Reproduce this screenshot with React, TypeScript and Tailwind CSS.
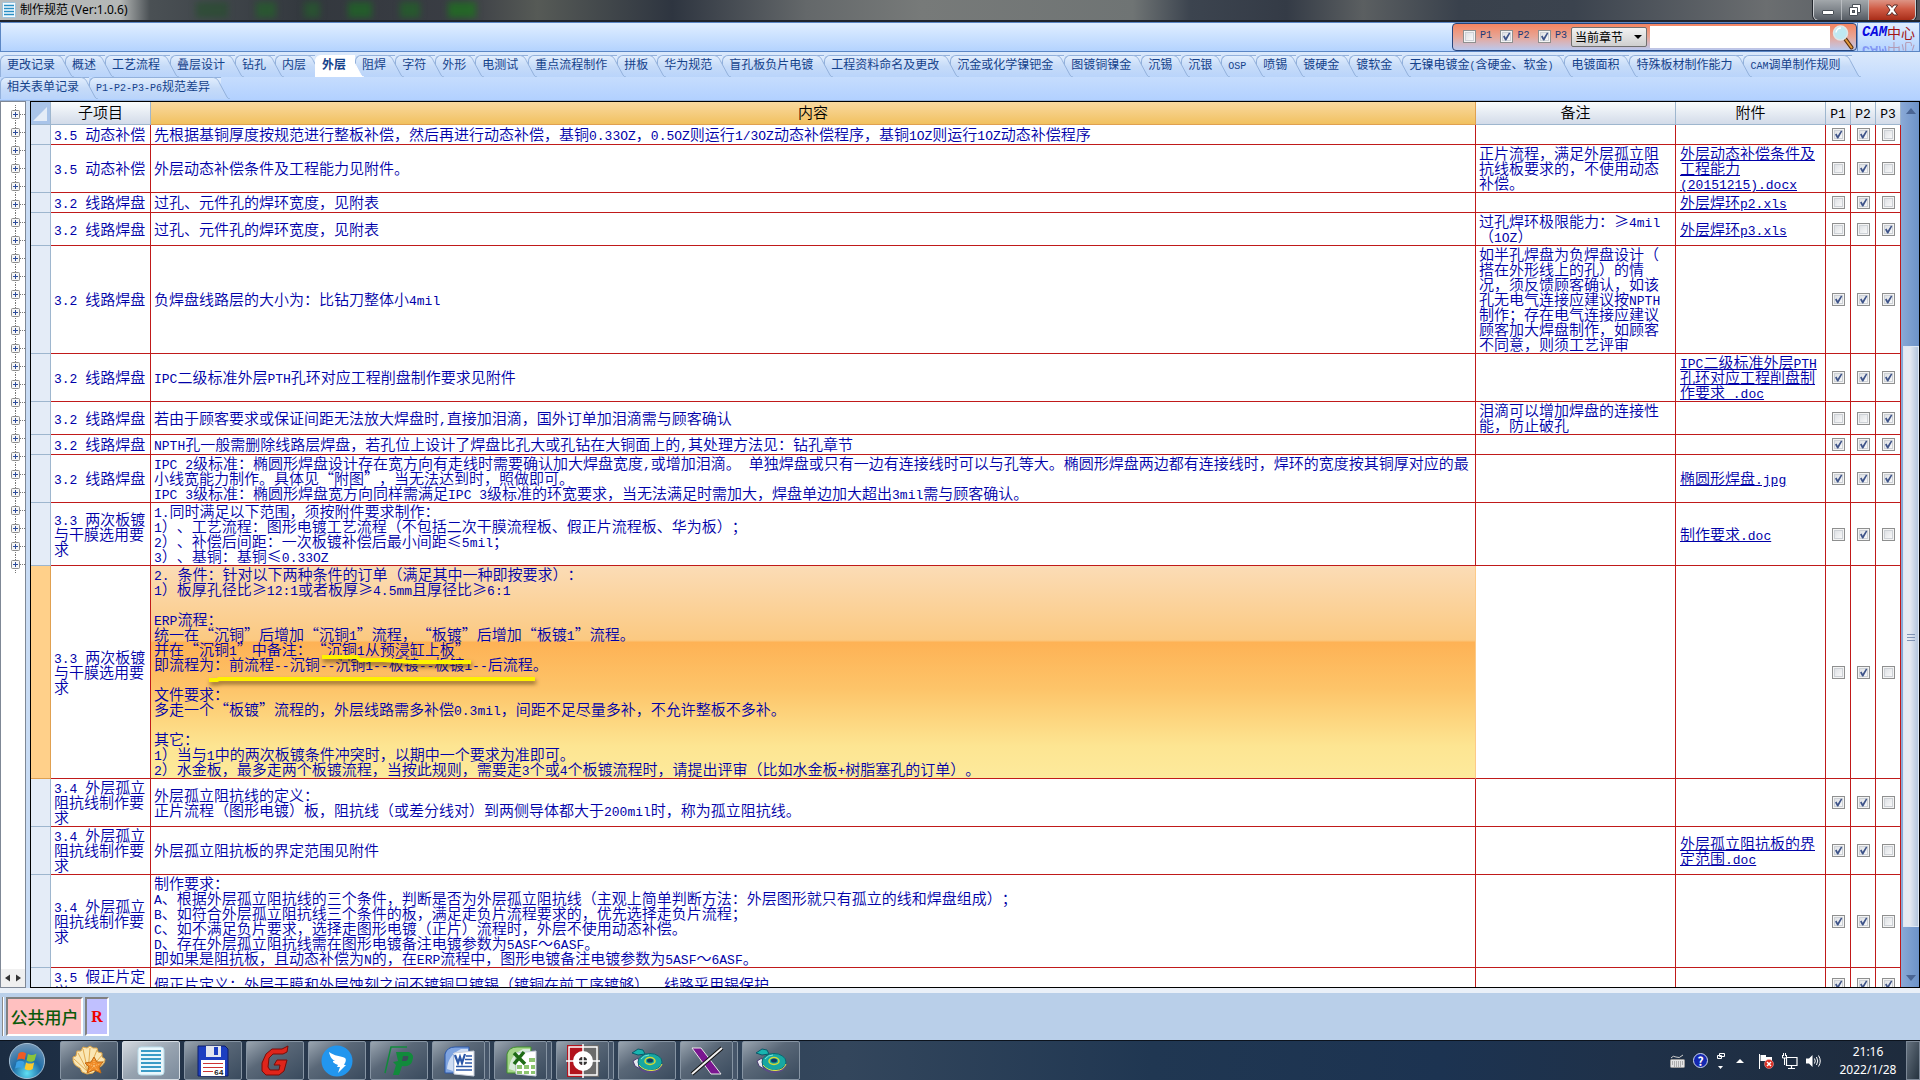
import { useState, type ReactNode } from 'react';

type Flags = [boolean, boolean, boolean];

interface SpecRow {
  item: string;
  content: string;
  remark?: string;
  file?: string;
  flags: Flags;
  selected?: boolean;
}

const TABS = [
  '更改记录', '概述', '工艺流程', '叠层设计', '钻孔', '内层', '外层', '阻焊', '字符', '外形', '电测试',
  '重点流程制作', '拼板', '华为规范', '盲孔板负片电镀', '工程资料命名及更改', '沉金或化学镍钯金', '图镀铜镍金',
  '沉锡', '沉银', 'OSP', '喷锡', '镀硬金', '镀软金', '无镍电镀金(含硬金、软金)', '电镀面积',
  '特殊板材制作能力', 'CAM调单制作规则',
];

const TABS_SECOND = ['相关表单记录', 'P1-P2-P3-P6规范差异'];

const ROWS: SpecRow[] = [
  {
    item: '3.5 动态补偿',
    content: '先根据基铜厚度按规范进行整板补偿，然后再进行动态补偿，基铜0.33OZ，0.5OZ则运行1/3OZ动态补偿程序，基铜1OZ则运行1OZ动态补偿程序',
    flags: [true, true, false],
  },
  {
    item: '3.5 动态补偿',
    content: '外层动态补偿条件及工程能力见附件。',
    remark: '正片流程，满足外层孤立阻\n抗线板要求的，不使用动态\n补偿。',
    file: '外层动态补偿条件及\n工程能力\n(20151215).docx',
    flags: [false, true, false],
  },
  {
    item: '3.2 线路焊盘',
    content: '过孔、元件孔的焊环宽度，见附表',
    file: '外层焊环p2.xls',
    flags: [false, true, false],
  },
  {
    item: '3.2 线路焊盘',
    content: '过孔、元件孔的焊环宽度，见附表',
    remark: '过孔焊环极限能力：≥4mil\n（1OZ）',
    file: '外层焊环p3.xls',
    flags: [false, false, true],
  },
  {
    item: '3.2 线路焊盘',
    content: '负焊盘线路层的大小为：比钻刀整体小4mil',
    remark: '如半孔焊盘为负焊盘设计（\n搭在外形线上的孔）的情\n况，须反馈顾客确认，如该\n孔无电气连接应建议按NPTH\n制作；存在电气连接应建议\n顾客加大焊盘制作，如顾客\n不同意，则须工艺评审',
    flags: [true, true, true],
  },
  {
    item: '3.2 线路焊盘',
    content: 'IPC二级标准外层PTH孔环对应工程削盘制作要求见附件',
    file: 'IPC二级标准外层PTH\n孔环对应工程削盘制\n作要求 .doc',
    flags: [true, true, true],
  },
  {
    item: '3.2 线路焊盘',
    content: '若由于顾客要求或保证间距无法放大焊盘时,直接加泪滴，国外订单加泪滴需与顾客确认',
    remark: '泪滴可以增加焊盘的连接性\n能，防止破孔',
    flags: [false, false, true],
  },
  {
    item: '3.2 线路焊盘',
    content: 'NPTH孔一般需删除线路层焊盘，若孔位上设计了焊盘比孔大或孔钻在大铜面上的,其处理方法见：钻孔章节',
    flags: [true, true, true],
  },
  {
    item: '3.2 线路焊盘',
    content: 'IPC 2级标准：椭圆形焊盘设计存在宽方向有走线时需要确认加大焊盘宽度,或增加泪滴。 单独焊盘或只有一边有连接线时可以与孔等大。椭圆形焊盘两边都有连接线时，焊环的宽度按其铜厚对应的最\n小线宽能力制作。具体见“附图”，当无法达到时，照做即可。\nIPC 3级标准：椭圆形焊盘宽方向同样需满足IPC 3级标准的环宽要求，当无法满足时需加大，焊盘单边加大超出3mil需与顾客确认。',
    file: '椭圆形焊盘.jpg',
    flags: [true, true, true],
  },
  {
    item: '3.3 两次板镀\n与干膜选用要\n求',
    content: '1.同时满足以下范围，须按附件要求制作：\n1）、工艺流程：图形电镀工艺流程（不包括二次干膜流程板、假正片流程板、华为板）；\n2）、补偿后间距：一次板镀补偿后最小间距≤5mil；\n3）、基铜：基铜≤0.33OZ',
    file: '制作要求.doc',
    flags: [false, true, false],
  },
  {
    item: '3.3 两次板镀\n与干膜选用要\n求',
    content: '2. 条件：针对以下两种条件的订单（满足其中一种即按要求）：\n1）板厚孔径比≥12:1或者板厚≥4.5mm且厚径比≥6:1\n\nERP流程：\n统一在“沉铜”后增加“沉铜1”流程，“板镀”后增加“板镀1”流程。\n并在“沉铜1”中备注：“沉铜1从预浸缸上板”\n即流程为：前流程--沉铜--沉铜1--板镀--板镀1--后流程。\n\n文件要求：\n多走一个“板镀”流程的，外层线路需多补偿0.3mil，间距不足尽量多补，不允许整板不多补。\n\n其它：\n1）当与1中的两次板镀条件冲突时，以期中一个要求为准即可。\n2）水金板，最多走两个板镀流程，当按此规则，需要走3个或4个板镀流程时，请提出评审（比如水金板+树脂塞孔的订单）。',
    flags: [false, true, false],
    selected: true,
  },
  {
    item: '3.4 外层孤立\n阻抗线制作要\n求',
    content: '外层孤立阻抗线的定义：\n正片流程（图形电镀）板，阻抗线（或差分线对）到两侧导体都大于200mil时，称为孤立阻抗线。',
    flags: [true, true, false],
  },
  {
    item: '3.4 外层孤立\n阻抗线制作要\n求',
    content: '外层孤立阻抗板的界定范围见附件',
    file: '外层孤立阻抗板的界\n定范围.doc',
    flags: [true, true, false],
  },
  {
    item: '3.4 外层孤立\n阻抗线制作要\n求',
    content: '制作要求：\nA、根据外层孤立阻抗线的三个条件，判断是否为外层孤立阻抗线（主观上简单判断方法：外层图形就只有孤立的线和焊盘组成）；\nB、如符合外层孤立阻抗线三个条件的板，满足走负片流程要求的，优先选择走负片流程；\nC、如不满足负片要求，选择走图形电镀（正片）流程时，外层不使用动态补偿。\nD、存在外层孤立阻抗线需在图形电镀备注电镀参数为5ASF～6ASF。\n即如果是阻抗板，且动态补偿为N的，在ERP流程中，图形电镀备注电镀参数为5ASF～6ASF。',
    flags: [true, true, false],
  },
  {
    item: '3.5 假正片定\n义',
    content: '假正片定义：外层干膜和外层蚀刻之间不镀铜只镀锡（镀铜在前工序镀够），线路采用锡保护。',
    flags: [true, true, true],
  },
];

// Latin runs are set in a half-width mono face next to the full-width Chinese
function Mixed({ text, small }: { text: string; small?: boolean }) {
  return (
    <>
      {text.split(/([\x20-\x7e]+)/).map((part, i) =>
        i % 2 === 1 ? (
          <span
            key={i}
            className={`font-['Liberation_Mono',monospace] leading-[0] ${small ? 'text-[10px]' : 'text-[13px]'}`}
          >
            {part}
          </span>
        ) : (
          part
        )
      )}
    </>
  );
}

function Check({ label, initial }: { label: string; initial: boolean }) {
  const [on, setOn] = useState(initial);
  return (
    <span className="relative inline-block size-[13px] align-middle">
      <input
        type="checkbox"
        aria-label={label}
        checked={on}
        onChange={(e) => setOn(e.target.checked)}
        className="block size-[13px] appearance-none border border-[#8e8f8f] bg-linear-to-br from-[#d8dbdf] to-white shadow-[inset_0_0_0_1px_#f4f4f4,inset_0_0_0_2px_#cdd1d6]"
      />
      {on && (
        <svg viewBox="0 0 13 13" className="pointer-events-none absolute inset-0 size-[13px]">
          <path d="M3 6.4 4.6 5.6 5.7 7.8 9 2.6 10.3 3.2 6.3 10.4 5.2 10.4Z" fill="#3f5489" />
        </svg>
      )}
    </span>
  );
}

function tabPadding(text: string) {
  if (text.length < 3) return 'pr-[9px]';
  return text.length > 6 ? 'pr-[11px]' : 'pr-[10px]';
}

function Tab({ text, index, active, onClick }: { text: string; index: number; active?: boolean; onClick: () => void }) {
  return (
    <button
      type="button"
      onClick={onClick}
      style={{ zIndex: active ? 50 : 40 - index }}
      className={`relative h-[22px] shrink-0 rounded-tl-md border-t border-l pb-1.5 pl-[6px] text-left text-xs leading-[14px] whitespace-nowrap text-[#15428b] ${tabPadding(text)} ${
        active
          ? 'border-white bg-white font-bold'
          : 'border-[#93b1dc] bg-linear-to-b from-[#e2eefd] via-[#c6dbf8] to-[#b9d4fb]'
      }`}
    >
      <svg viewBox="0 0 20 22" className="absolute -top-px -right-[9px] h-[22px] w-5">
        <defs>
          <linearGradient id="tabFace" x1="0" y1="0" x2="0" y2="1">
            <stop offset="0" stopColor="#e2eefd" />
            <stop offset="0.5" stopColor="#c6dbf8" />
            <stop offset="1" stopColor="#b9d4fb" />
          </linearGradient>
        </defs>
        <path d="M0 0.5 H2 C7 0.5 8 3 10 7 L17 20 Q18 22 20 22 H0Z" fill={active ? '#fff' : 'url(#tabFace)'} />
        <path
          d="M0 0.5 H2 C7 0.5 8 3 10 7 L17 20 Q18 22 20 22"
          fill="none"
          stroke={active ? '#fff' : '#93b1dc'}
        />
      </svg>
      <span className="relative">
        <Mixed text={text} small />
      </span>
    </button>
  );
}

function TitleBar() {
  return (
    <header className="flex h-[22px] shrink-0 justify-between overflow-hidden border-b-2 border-[#20242c] bg-[linear-gradient(90deg,#b9bcbd_0,#b4b7b6_120px,#4a5054_150px,#33383e_16%,#3a3d44_24%,#565a56_28%,#2e3540_35%,#64686a_42%,#777a79_48%,#6f7474_59%,#3c444f_62%,#343b46_67%,#5b5f61_71%,#39414c_76%,#3b434e_82%,#6b6e70_92%,#50565e_100%)]">
      <div className="flex items-center gap-1 pl-0.5">
        <svg viewBox="0 0 14 16" className="h-4 w-3.5">
          <rect x="0.5" y="0.5" width="13" height="15" rx="1" fill="#f4fbff" stroke="#9cc3dc" />
          <path d="M2 3.5H12M2 6.5H12M2 9.5H12M2 12.5H12" stroke="#2a8fc4" strokeWidth="1.5" />
        </svg>
        <h1 className="font-['Noto_Sans','Noto_Sans_CJK_SC',sans-serif] text-xs text-black">制作规范 (Ver:1.0.6)</h1>
        <div className="flex gap-7 pl-16 blur-[3px]">
          <i className="h-4 w-8 bg-[#24502b]/60" />
          <i className="h-4 w-5 bg-[#23602a]/70" />
          <i className="h-4 w-4 bg-[#23602a]/60" />
          <i className="h-4 w-6 bg-[#1c6a22]/70" />
          <i className="h-4 w-5 bg-[#1c6a22]/60" />
          <i className="h-4 w-7 bg-[#1f6f20]/80" />
        </div>
      </div>
      <div className="mr-1 flex h-[21px] overflow-hidden rounded-b-md border border-t-0 border-[#c9ccd0] shadow-[0_0_0_1px_#22262c]">
        <button type="button" aria-label="最小化" className="grid w-7 place-items-center border-r border-[#c9ccd0]/70 bg-linear-to-b from-[#a2a7ab] via-[#7f858b] via-50% to-[#555b63]">
          <svg viewBox="0 0 14 12" className="h-3 w-3.5">
            <rect x="1.5" y="6.5" width="11" height="4" rx="0.5" fill="#fff" stroke="#4a5058" />
          </svg>
        </button>
        <button type="button" aria-label="还原" className="grid w-[27px] place-items-center border-r border-[#c9ccd0]/70 bg-linear-to-b from-[#a2a7ab] via-[#7f858b] via-50% to-[#555b63]">
          <svg viewBox="0 0 14 14" className="size-3.5">
            <path d="M4.5 1.5H12.5V9.5H4.5Z" fill="#fff" stroke="#4a5058" />
            <path d="M1.5 4.5H9.5V12.5H1.5Z" fill="#fff" stroke="#4a5058" />
            <rect x="4.5" y="7.5" width="2" height="2" fill="#777" stroke="#4a5058" />
          </svg>
        </button>
        <button type="button" aria-label="关闭" className="grid w-[46px] place-items-center bg-linear-to-b from-[#dd9485] via-[#cf5a44] via-45% to-[#a82c17]">
          <svg viewBox="0 0 14 12" className="h-3 w-3.5">
            <path d="M1.5 1H5L7 3.5 9 1H12.5L9 6 12.5 11H9L7 8.5 5 11H1.5L5 6Z" fill="#fff" stroke="#5a2a26" />
          </svg>
        </button>
      </div>
    </header>
  );
}

function SearchBar() {
  return (
    <div className="flex h-[30px] shrink-0 justify-end border border-[#5b86c4] bg-linear-to-b from-[#e0eeff] to-[#b4d3fe]">
      <form
        onSubmit={(e) => e.preventDefault()}
        className="flex w-[405px] items-center rounded-sm border border-[#26457c] bg-linear-to-b from-[#f4845f] via-[#e7a596] to-[#b9c8ee] pl-2.5 text-[#1d3a78]"
      >
        <div className="flex w-[104px] justify-between pb-0.5">
          {['P1', 'P2', 'P3'].map((p, i) => (
            <label key={p} className="flex items-center gap-1 font-['Liberation_Mono',monospace] text-[10px] leading-none">
              <Check label={p} initial={i > 0} />
              {p}
            </label>
          ))}
        </div>
        <select
          aria-label="搜索范围"
          className="ml-1 h-5 w-[76px] appearance-none rounded-xs border border-[#707070] bg-linear-to-b from-[#f2f2f2] to-[#cfcfcf] pl-[3px] text-xs leading-4 text-black"
        >
          <option>当前章节</option>
        </select>
        <svg viewBox="0 0 8 4" className="pointer-events-none -ml-[13px] h-1 w-2">
          <path d="M0 0H8L4 4Z" fill="#000" />
        </svg>
        <input type="text" aria-label="搜索内容" className="ml-2 h-[22px] min-w-0 flex-1 bg-white px-1 text-xs" />
        <button type="submit" aria-label="搜索" className="mx-0.5">
          <svg viewBox="0 0 22 26" className="h-[26px] w-[22px]">
            <path d="M12.5 14 19.5 23.5" stroke="#5a3212" strokeWidth="4" strokeLinecap="round" />
            <path d="M14 16 19.5 23.5" stroke="#e59a3c" strokeWidth="2" strokeLinecap="round" />
            <circle cx="8.5" cy="9" r="7" fill="#bfe9f2" stroke="#dfe6e8" strokeWidth="1.5" />
            <path d="M4 8.5A5 5 0 0 1 9 4" stroke="#fff" strokeWidth="1.5" fill="none" />
          </svg>
        </button>
      </form>
      <div className="flex w-[62px] flex-col items-center overflow-hidden border-l border-[#6f95cf] leading-none">
        <p className="flex h-[18px] items-center leading-[18px]">
          <span className="font-['Liberation_Mono',monospace] text-sm leading-[18px] font-bold text-[#0a0ae0] italic">CAM</span>
          <span className="text-sm leading-[18px] text-[#a31515]">中心</span>
        </p>
        {/* mirrored reflection under the logo */}
        <p aria-hidden="true" className="flex h-[18px] -scale-y-100 items-center opacity-30">
          <span className="font-['Liberation_Mono',monospace] text-sm leading-[18px] font-bold text-[#0a0ae0] italic">CAM</span>
          <span className="text-sm leading-[18px] text-[#a31515]">中心</span>
        </p>
      </div>
    </div>
  );
}

function TreePanel() {
  return (
    <nav aria-label="目录" className="flex w-[26px] shrink-0 flex-col border border-[#7f8896] bg-white">
      <ul className="min-h-0 flex-1 overflow-hidden pt-[3px]">
        {Array.from({ length: 26 }, (_, i) => (
          <li key={i} className="h-[18px]">
            <button type="button" aria-label={`展开 ${i + 1}`} className="block h-[18px] w-6">
              <svg viewBox="0 0 24 18" className="h-[18px] w-6">
                <path d="M14.5 0V5M14.5 13V18M19 9.5H24" stroke="#777" strokeDasharray="1 1" />
                <rect x="10.5" y="5.5" width="8" height="8" rx="1" fill="#f6f6f6" stroke="#8d8d8d" />
                <path d="M12 9.5H17M14.5 7V12" stroke="#2b4a9a" />
              </svg>
            </button>
          </li>
        ))}
      </ul>
      <div className="flex h-[18px] items-center justify-between bg-[#f0f0f0] px-1">
        <svg viewBox="0 0 5 7" className="h-2 w-[5px]"><path d="M5 0V7L0 3.5Z" fill="#333" /></svg>
        <svg viewBox="0 0 5 7" className="h-2 w-[5px]"><path d="M0 0V7L5 3.5Z" fill="#333" /></svg>
      </div>
    </nav>
  );
}

function HeadCell({ children, hot }: { children?: ReactNode; hot?: boolean }) {
  return (
    <th
      className={`h-[23px] border-r border-b p-0 pb-[3px] text-[15px] leading-[15px] font-[350] text-black ${
        hot ? 'border-[#e0a050] bg-linear-to-b from-[#f9d99f] to-[#f1c15f]' : 'border-[#9eb6ce] bg-linear-to-b from-[#f9fcfd] to-[#d3dbe9]'
      }`}
    >
      {children}
    </th>
  );
}

const CELL = 'border-r border-b border-[#c01a1a] pt-0 pr-0 pb-[2px] pl-[3px]';

function SpecTable() {
  return (
    <table className="w-full table-fixed border-separate border-spacing-0 text-[15px] leading-[15px] font-[350] text-[#0000a8]">
      <colgroup>
        <col className="w-5" />
        <col className="w-[100px]" />
        <col />
        <col className="w-[200px]" />
        <col className="w-[150px]" />
        <col className="w-[25px]" />
        <col className="w-[25px]" />
        <col className="w-[25px]" />
      </colgroup>
      <thead>
        <tr>
          <th aria-label="全选" className="border-r border-b border-[#9eb6ce] bg-[#a9c4e9] p-0">
            <svg viewBox="0 0 19 22" className="h-[22px] w-[19px]">
              <path d="M16 5V19H2Z" fill="#e4ecf7" />
            </svg>
          </th>
          <HeadCell>子项目</HeadCell>
          <HeadCell hot>内容</HeadCell>
          <HeadCell>备注</HeadCell>
          <HeadCell>附件</HeadCell>
          <HeadCell><Mixed text="P1" /></HeadCell>
          <HeadCell><Mixed text="P2" /></HeadCell>
          <HeadCell><Mixed text="P3" /></HeadCell>
        </tr>
      </thead>
      <tbody>
        {ROWS.map((row, i) => (
          <tr key={i} className="h-5">
            <td
              className={
                row.selected
                  ? 'border-r border-b border-[#e0a050] bg-[#ffd08a]'
                  : 'border-r border-b border-[#9eb6ce] bg-[#e4ecf7]'
              }
            />
            <td className={`${CELL} whitespace-pre`}><Mixed text={row.item} /></td>
            <td
              className={`${CELL} whitespace-pre ${
                row.selected
                  ? 'relative border-r-[#fdc987] bg-[linear-gradient(180deg,#fbdcb6_0%,#fbc981_35%,#feb255_36%,#fdc469_58%,#fde592_85%,#fdea9c_100%)]'
                  : ''
              }`}
            >
              <Mixed text={row.content} />
              {row.selected && (
                <svg
                  viewBox="0 0 400 130"
                  className="pointer-events-none absolute top-0 left-0 h-[130px] w-[400px] drop-shadow-[1px_3px_2px_rgba(60,40,0,0.6)]"
                >
                  <path d="M171 91 H206 L209 94 H232 L262 96 H320" fill="none" stroke="#fff200" strokeWidth="4" />
                  <path d="M58 114 H66 L68 113 H384" fill="none" stroke="#fff200" strokeWidth="4" />
                </svg>
              )}
            </td>
            <td className={`${CELL} whitespace-pre`}><Mixed text={row.remark ?? ''} /></td>
            <td className="border-r border-b border-[#c01a1a] pt-0 pr-0 pb-[2px] pl-1 whitespace-pre">
              {row.file && (
                <a href="#file" className="underline underline-offset-1">
                  <Mixed text={row.file} />
                </a>
              )}
            </td>
            {row.flags.map((on, k) => (
              <td key={k} className="border-r border-b border-[#c01a1a] p-0 text-center leading-[0]">
                <Check label={`P${k + 1}`} initial={on} />
              </td>
            ))}
          </tr>
        ))}
      </tbody>
    </table>
  );
}

function ScrollTrack() {
  return (
    <div className="flex w-[18px] shrink-0 flex-col items-center bg-linear-to-r from-[#8aa9d6] to-[#6c92c8] py-1.5 pl-px">
      <svg viewBox="0 0 10 6" className="h-1.5 w-2.5"><path d="M5 0 10 6H0Z" fill="#4a6594" /></svg>
      <div className="flex-[233]" />
      <div className="grid w-4 flex-[580] place-items-center border border-[#dfe8f4] bg-linear-to-r from-[#e6eaf2] from-40% to-[#b3c5dd]">
        <svg viewBox="0 0 8 8" className="size-2"><path d="M0 1.5H8M0 4.5H8M0 7.5H8" stroke="#7f93b5" /></svg>
      </div>
      <div className="flex-[48]" />
      <svg viewBox="0 0 10 6" className="h-1.5 w-2.5"><path d="M0 0H10L5 6Z" fill="#4a6594" /></svg>
    </div>
  );
}

/* ---- taskbar icons ---- */

function ShellIcon() {
  return (
    <svg viewBox="0 0 34 32" className="h-8 w-[34px]">
      <path d="M15 29 10 27 8 23Q0 20 1 12L4 11 5 6 9 6 11 2 15 3 18 1 21 3 25 3 26 7 30 8 30 12 33 14Q33 20 26 23L21 28Z" fill="#fae6b4" stroke="#dca64a" />
      <path d="M16 27 2 14M16 27 6 8M16 27 11 4M16 27 18 3M16 27 25 5M16 27 30 10M16 27 32 16" stroke="#e2ac52" />
      <path d="M22 12 25 17 31 17 27 22 29 28 22 25 15 28 17 22 13 18 19 17Z" fill="#f08c28" stroke="#c06a14" />
      <path d="M22 14V21M22 21 28 19M22 21 26 26M22 21 17 26M22 21 16 19" stroke="#fbc27a" strokeDasharray="1 1" />
    </svg>
  );
}

function NotesIcon() {
  return (
    <svg viewBox="0 0 28 30" className="h-[30px] w-7">
      <rect x="1" y="1" width="26" height="28" rx="3" fill="#eaf7fc" stroke="#b9dcea" />
      <path d="M4 5H24M4 9H24M4 13H24M4 17H24M4 21H24M4 25H24" stroke="#3a9bc6" strokeWidth="2" />
    </svg>
  );
}

function FloppyIcon() {
  return (
    <svg viewBox="0 0 32 32" className="size-8">
      <path d="M1 1H28L31 4V31H1Z" fill="#1d3fc0" stroke="#0d1e6c" />
      <rect x="9" y="1" width="15" height="11" fill="#e3e6ee" />
      <rect x="17" y="2" width="4" height="8" fill="#1d3fc0" />
      <rect x="4" y="15" width="24" height="16" fill="#fff" />
      <path d="M6 18.5H26M6 22.5H26M6 26.5H16" stroke="#c33" />
      <text x="17" y="30" fontSize="8" fontFamily="Liberation Mono" fontWeight="bold" fill="#222">64</text>
    </svg>
  );
}

function GIcon() {
  return (
    <svg viewBox="0 0 32 32" className="size-8">
      <path d="M29 1 28 7 24 9H14L10 13 9 22 11 25H20L21 20H15L18 15H28L25 26 20 30H7L3 26 3 18 7 9 13 4 23 4Z" fill="#e0251b" stroke="#7c0d08" />
    </svg>
  );
}

function BirdIcon() {
  return (
    <svg viewBox="0 0 32 32" className="size-8">
      <circle cx="16" cy="16" r="15.5" fill="#2296ee" />
      <path d="M8 7C13 11 20 11 24 13 26 15 24 18 23 20L25 20 17 28 19 22 16 22 17 20C12 18 12 17 12 16L14 16C10 14 9 11 8 7Z" fill="#fff" />
    </svg>
  );
}

function GreenPIcon() {
  return (
    <svg viewBox="0 0 32 32" className="size-8">
      <path d="M13 7H26Q32 9 29 17 27 22 19 21L16 30H10L13 20 10 17 15 16Z" fill="#128a3c" />
      <path d="M20 11H25Q26 14 23 16H19Z" fill="#3a4c58" />
      <path d="M2 28 8 2H24" fill="none" stroke="#128a3c" strokeWidth="1.5" />
    </svg>
  );
}

function OfficeIcon({ word }: { word?: boolean }) {
  const c = word ? '#2b57a8' : '#3f8f2b';
  return (
    <svg viewBox="0 0 32 32" className="size-8">
      <path d="M2 28V9Q4 2 12 2H26V28Z" fill={word ? '#7fa4e0' : '#a4d48a'} stroke={c} />
      <path d="M4 24Q5 10 18 4H25V8H10V26Z" fill="#eef4fb" opacity="0.7" />
      <path d="M11 8 31 6V31L11 29Z" fill="#fff" stroke="#c7cedb" />
      {word ? (
        <>
          <path d="M12 10 15 18 17 12 19 18 22 9" fill="none" stroke={c} strokeWidth="2.2" />
          <path d="M23 11H29M22 14.5H29M22 18H29M13 21.5H29M13 25H29" stroke={c} strokeWidth="1.5" />
        </>
      ) : (
        <>
          <path d="M12 20H17V24H12ZM19 20H24V24H19ZM26 20H30V24H26ZM12 26H17V29H12ZM19 26H24V29H19ZM26 26H30V29H26ZM24 13H30V17H24Z" fill="#8cc46f" />
          <path d="M9 8 20 19M19 7 9 19" stroke="#1f6b16" strokeWidth="3.5" />
        </>
      )}
    </svg>
  );
}

function TargetIcon() {
  return (
    <svg viewBox="0 0 34 34" className="size-[34px]">
      <rect x="1" y="1" width="16" height="32" fill="#b3131d" />
      <rect x="17" y="1" width="16" height="32" fill="#6b6b6b" />
      <path d="M3 3H31V31H3ZM0 17H34M17 0V34" fill="none" stroke="#fff" strokeWidth="1.5" />
      <circle cx="17" cy="17" r="7" fill="none" stroke="#fff" strokeWidth="6" />
      <circle cx="17" cy="17" r="4" fill="#333" />
      <path d="M13 17H21M17 13V21" stroke="#fff" strokeWidth="1.5" />
    </svg>
  );
}

function DiscIcon() {
  return (
    <svg viewBox="0 0 34 28" className="h-7 w-[34px]">
      <path d="M2 6 8 2 13 3 15 7 8 8Z" fill="#18b4b0" stroke="#0a5a6a" />
      <path d="M3 14 8 11 10 22 5 19Z" fill="#e8e8f0" stroke="#4a3d70" />
      <ellipse cx="20" cy="18" rx="12" ry="8" fill="#5b4c86" />
      <ellipse cx="20" cy="15" rx="12" ry="8.5" fill="#18a7a2" stroke="#0b6672" />
      <ellipse cx="20" cy="14" rx="5" ry="3.5" fill="none" stroke="#d8d832" strokeWidth="1.5" />
      <ellipse cx="20" cy="13.5" rx="3" ry="2" fill="#123c66" />
      <path d="M9 18Q14 24 22 23.5T32 17" fill="none" stroke="#e5e34a" />
      <path d="M11 12Q14 8 19 8" fill="none" stroke="#7be6df" />
    </svg>
  );
}

function CrossIcon() {
  return (
    <svg viewBox="0 0 34 30" className="h-[30px] w-[34px]">
      <path d="M2 2H11L31 28H21Z" fill="#7a1690" stroke="#e8e8e8" />
      <path d="M32 2 2 28" stroke="#111" strokeWidth="4" />
      <path d="M32 2 2 28" stroke="#f2f2f2" strokeWidth="2" />
    </svg>
  );
}

const APPS = [
  { name: 'Shell', icon: <ShellIcon /> },
  { name: '制作规范', icon: <NotesIcon />, active: true },
  { name: 'Floppy', icon: <FloppyIcon /> },
  { name: 'Genesis', icon: <GIcon /> },
  { name: 'DingTalk', icon: <BirdIcon /> },
  { name: 'Project', icon: <GreenPIcon /> },
  { name: 'Word', icon: <OfficeIcon word />, stacked: true },
  { name: 'Excel', icon: <OfficeIcon />, stacked: true },
  { name: 'Target', icon: <TargetIcon />, stacked: true },
  { name: 'Disc', icon: <DiscIcon /> },
  { name: 'X', icon: <CrossIcon />, stacked: true },
  { name: 'Disc 2', icon: <DiscIcon /> },
];

function Taskbar() {
  return (
    <footer className="flex h-10 shrink-0 items-stretch border-t border-[#0c131d] bg-[linear-gradient(90deg,#1b2c42_0,#2c3c50_20%,#33465c_44%,#203752_60%,#1c3351_75%,#1f3149_85%,#1e2b3c_100%)]">
      <button type="button" aria-label="开始" className="grid w-[54px] place-items-center">
        <svg viewBox="0 0 40 40" className="size-[38px]">
          <defs>
            <radialGradient id="orb" cx="0.5" cy="0.85" r="0.9">
              <stop offset="0" stopColor="#5fe0f4" />
              <stop offset="0.45" stopColor="#1f6ea8" />
              <stop offset="1" stopColor="#7f9bb8" />
            </radialGradient>
          </defs>
          <circle cx="20" cy="20" r="18.5" fill="url(#orb)" stroke="#a9c3d8" />
          <path d="M11 12Q15 9 19 12L17.5 19Q14 16.5 9.5 19Z" fill="#ee5b25" />
          <path d="M21 12.5Q25 15 30 12L28 19.5Q24 22 19.5 19.5Z" fill="#8ac43b" />
          <path d="M9 21Q13 18.5 17 21L15.5 28Q12 25.5 7.5 28Z" fill="#3aa0e4" />
          <path d="M19 21.5Q23 24 27.5 21.5L26 28.5Q22 31 17.5 28.5Z" fill="#fbc92c" />
        </svg>
      </button>
      <div className="flex gap-1 pl-1.5">
        {APPS.map((app) => (
          <div key={app.name} className="flex w-[58px]">
            <button
              type="button"
              aria-label={app.name}
              className={`grid min-w-0 flex-1 place-items-center rounded-xs border ${
                app.active
                  ? 'border-[#d5dce3] bg-linear-to-br from-[#d3d9df] via-[#97a3b0] to-[#7c8b9c]'
                  : 'border-[#8694a3] bg-linear-to-br from-[#9aa5b0] via-[#5a6878] via-40% to-[#3a4b5e]'
              }`}
            >
              {app.icon}
            </button>
            {app.stacked && <span className="w-[5px] rounded-r-xs border-y border-r border-[#8694a3] bg-[#46566a]" />}
          </div>
        ))}
      </div>
      <div className="ml-auto flex items-center gap-2 text-white">
        <svg viewBox="0 0 15 14" className="h-3.5 w-[15px]">
          <path d="M1 4Q3 1 6 3T13 1" fill="none" stroke="#cfcfcf" />
          <rect x="0.5" y="5.5" width="14" height="8" rx="1" fill="#e4e4e4" stroke="#999" />
          <path d="M2 8H13M2 10H13M4 12H11" stroke="#777" strokeDasharray="1 1" />
        </svg>
        <span className="grid size-[15px] place-items-center rounded-full border border-[#cdd6f0] bg-[#1428b0] text-xs leading-none font-bold">?</span>
        <svg viewBox="0 0 10 18" className="h-[18px] w-2.5">
          <path d="M3.5 1.5H8.5V4.5H3.5ZM1.5 3.5H5.5V6.5H1.5Z" fill="#26374d" stroke="#fff" />
          <path d="M2 14H7L4.5 17Z" fill="#fff" />
        </svg>
        <svg viewBox="0 0 8 4" className="ml-0.5 h-1 w-2"><path d="M4 0 8 4H0Z" fill="#fff" /></svg>
        <svg viewBox="0 0 16 16" className="ml-1.5 size-4">
          <path d="M1.5 1V16" stroke="#fff" />
          <path d="M2.5 2H8V4H14V10H8V8H2.5Z" fill="#fff" />
          <circle cx="11" cy="11" r="4.5" fill="#d92b1f" stroke="#fbb" strokeWidth="0.5" />
          <path d="M9 9 13 13M13 9 9 13" stroke="#fff" strokeWidth="1.5" />
        </svg>
        <svg viewBox="0 0 16 16" className="size-4">
          <path d="M4.5 4.5H15V12.5H4.5ZM6 15.5H13M9.5 12V15" fill="none" stroke="#fff" strokeWidth="1.2" />
          <path d="M0.5 2V5H4.5V2M2.5 5V12M1.5 0V3M3.5 0V3" fill="none" stroke="#fff" />
        </svg>
        <svg viewBox="0 0 16 14" className="h-3.5 w-4">
          <path d="M0 4.5H3L6.5 1V13L3 9.5H0Z" fill="#fff" />
          <path d="M8.5 4.5Q10 7 8.5 9.5M10.5 3Q13 7 10.5 11M12.5 1.5Q16 7 12.5 12.5" fill="none" stroke="#fff" />
        </svg>
        <time className="w-[76px] text-center font-['Noto_Sans',sans-serif] text-xs leading-[18px]">
          21:16
          <br />
          2022/1/28
        </time>
      </div>
      <button type="button" aria-label="显示桌面" className="w-[14px] border border-[#7c8896] bg-linear-to-br from-[#66727f] to-[#26333f]" />
    </footer>
  );
}

export default function App() {
  const [tab, setTab] = useState('外层');

  return (
    <div
      lang="zh-CN"
      className="flex h-screen flex-col overflow-hidden bg-[#b9cfe9] font-['Noto_Sans_CJK_SC',sans-serif] [font-kerning:none] [text-spacing-trim:space-all]"
    >
      <TitleBar />
      <SearchBar />
      <div className="shrink-0 border-b border-[#93b1dc] bg-linear-to-b from-[#dbe9fb] to-[#b2d1ff] pt-[3px] pb-px">
        <div className="flex">
          {TABS.map((t, i) => (
            <Tab key={t} text={t} index={i} active={t === tab} onClick={() => setTab(t)} />
          ))}
        </div>
        <div className="flex">
          {TABS_SECOND.map((t, i) => (
            <Tab key={t} text={t} index={i} active={t === tab} onClick={() => setTab(t)} />
          ))}
        </div>
      </div>

      <main className="flex min-h-0 flex-1 gap-1 bg-[#c9dcf4]">
        <TreePanel />
        <div className="flex min-w-0 flex-1 border border-black bg-white">
          <div className="min-w-0 flex-1 overflow-hidden">
            <SpecTable />
          </div>
          <ScrollTrack />
        </div>
      </main>

      <div className="h-[5px] shrink-0 bg-[#eaf0f8]" />
      <div className="flex h-[47px] shrink-0 gap-0.5 bg-[#b9cfe9] py-1 pl-0.5">
        <div className="w-0.5 border-l border-[#8a8a8a] bg-white" />
        <p className="grid w-[77px] place-items-center border-2 border-t-[#808080] border-r-white border-b-white border-l-[#808080] bg-[#ffc0c0] text-[17px] leading-5 font-medium text-[#0b5a0b]">
          公共用户
        </p>
        <p className="grid w-6 place-items-center border-2 border-t-[#808080] border-r-white border-b-white border-l-[#808080] bg-[#c0c0ff] font-['Liberation_Serif',serif] text-base leading-5 font-bold text-[#f00000]">
          R
        </p>
      </div>
      <Taskbar />
    </div>
  );
}
